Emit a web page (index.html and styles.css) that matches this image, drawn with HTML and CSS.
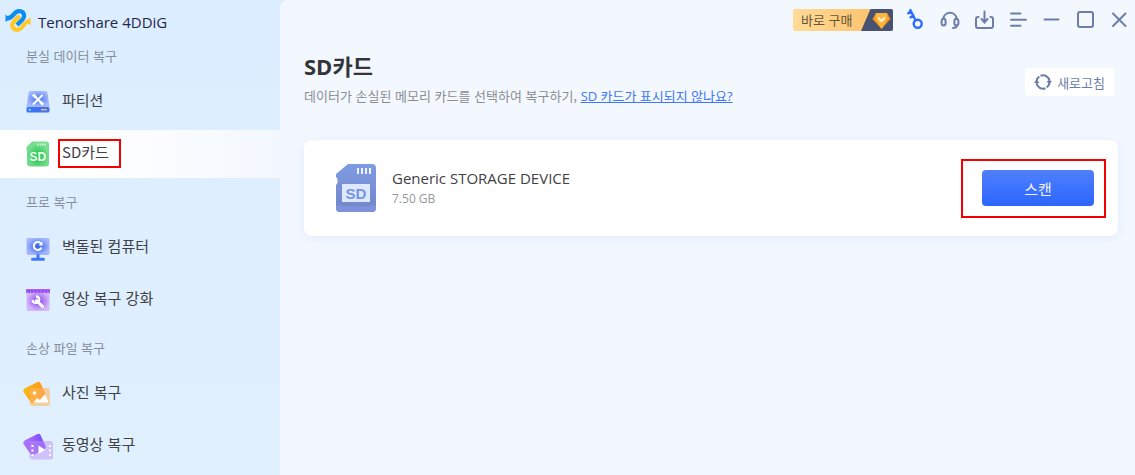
FILE: index.html
```html
<!DOCTYPE html>
<html lang="ko">
<head>
<meta charset="utf-8">
<title>Tenorshare 4DDiG</title>
<link rel="stylesheet" href="styles.css">
</head>
<body>
<div class="app">
  <aside class="sidebar">
    <div class="brand">
      <svg class="brand-logo" width="28" height="24" viewBox="0 0 28 24" aria-hidden="true">
        <path d="M25.600 9.300v8l-5-3.500Z" fill="#ffc928"/>
        <path d="M.5 6.500v7.500l5-3.500Z" fill="#0b8df0"/>
        <path d="M14.500 8L9 13.500c-4 4.500-.5 8.300 3.500 8.300 5.500 0 5.500-7.500 11.500-8.500" fill="none" stroke="#ffc928" stroke-width="4.200"/>
        <path d="M2.500 10.300C8.500 10 8.500 3.200 14 3.200c5 0 6.500 4.800 3.500 8.300l-5.500 5.500" fill="none" stroke="#0b8df0" stroke-width="4.200"/>
        <path d="M14.500 8L9 13.500" stroke="#ffc928" stroke-width="4.200"/>
      </svg>
      <span class="brand-name">Tenorshare 4DDiG</span>
    </div>
    <nav class="menu">
      <h2 class="menu-heading">분실 데이터 복구</h2>
      <ul class="menu-list">
        <li><a class="menu-item" href="#">
          <svg class="menu-icon" width="32" height="28" viewBox="0 0 32 28" aria-hidden="true">
            <defs><radialGradient id="g-disk"><stop offset="0" stop-color="#4673f5"/><stop offset="1" stop-color="#a5b9fb"/></radialGradient></defs>
            <path d="M8.500 3h15q1.800 0 2 2l2 14h-23l2-14q.2-2 2-2Z" fill="url(#g-disk)"/>
            <rect x="4.500" y="19" width="23" height="5.500" rx="1.500" fill="#3f72f2"/>
            <circle cx="7.800" cy="21.700" r="1.200" fill="#5fe6ff"/><path d="M19 21.700h6" stroke="#e0b676" stroke-width="1.600"/>
            <path d="M12.500 8l8 8M20 7.500l-8.500 8.500" stroke="#fff" stroke-width="2" stroke-linecap="round"/>
            <path d="M11 6.500l3 3M18.500 14l2.500 2.500" stroke="#fff" stroke-width="3"/>
          </svg>
          <span class="menu-text">파티션</span></a></li>
        <li><a class="menu-item menu-item-active" href="#" aria-current="page">
          <svg class="menu-icon" width="32" height="28" viewBox="0 0 32 28" aria-hidden="true">
            <defs><radialGradient id="g-sd" cy=".6"><stop offset="0" stop-color="#10c43c"/><stop offset="1" stop-color="#78dd91"/></radialGradient></defs>
            <path d="M10 1.500h14q3 0 3 3v19q0 3-3 3H8q-3 0-3-3v-12l-.5-1V7Z" fill="url(#g-sd)"/>
            <path d="M15.500 4.500h9" stroke="#d9ffe2" stroke-width="2" stroke-dasharray="1.300 1"/>
            <text class="sd-small" x="15.800" y="20.500" text-anchor="middle">SD</text>
          </svg>
          <span class="menu-text marked-text">SD카드</span></a></li>
      </ul>
      <h2 class="menu-heading">프로 복구</h2>
      <ul class="menu-list">
        <li><a class="menu-item" href="#">
          <svg class="menu-icon" width="32" height="28" viewBox="0 0 32 28" aria-hidden="true">
            <defs><radialGradient id="g-pc"><stop offset="0" stop-color="#3261f3"/><stop offset="1" stop-color="#a3b6fa"/></radialGradient></defs>
            <rect x="4.500" y="4" width="23" height="17" rx="2" fill="url(#g-pc)"/>
            <path d="M16 21v4M10.500 25.300h11" stroke="#3f79fb" stroke-width="3" stroke-linecap="round"/>
            <path d="M19 9.500a4 4 0 1 0 .5 4" fill="none" stroke="#fff" stroke-width="2"/><path d="M20.500 7.500v4h-4Z" fill="#fff"/>
          </svg>
          <span class="menu-text">벽돌된 컴퓨터</span></a></li>
        <li><a class="menu-item" href="#">
          <svg class="menu-icon" width="32" height="28" viewBox="0 0 32 28" aria-hidden="true">
            <defs><radialGradient id="g-vid"><stop offset="0" stop-color="#8742ee"/><stop offset="1" stop-color="#d3b6f8"/></radialGradient></defs>
            <path d="M4.500 5h23v18q0 2-2 2h-19q-2 0-2-2Z" fill="url(#g-vid)"/>
            <path d="M4 5h24" stroke="#9a45f5" stroke-width="3.600"/><path d="M4.500 5.500h23" stroke="#c996fb" stroke-width="1.500" stroke-dasharray="1 2.500"/>
            <path d="M14.500 14.500l6 6" stroke="#fff" stroke-width="3" stroke-linecap="round"/>
            <path d="M14 10.500a3.200 3.200 0 1 1-3.300 3.400" fill="none" stroke="#fff" stroke-width="2.400"/>
          </svg>
          <span class="menu-text">영상 복구 강화</span></a></li>
      </ul>
      <h2 class="menu-heading">손상 파일 복구</h2>
      <ul class="menu-list">
        <li><a class="menu-item" href="#">
          <svg class="menu-icon" width="32" height="28" viewBox="0 0 32 28" aria-hidden="true">
            <defs><linearGradient id="g-photo" x2="1" y2=".4"><stop offset="0" stop-color="#fac313"/><stop offset="1" stop-color="#ff8d20"/></linearGradient></defs>
            <path d="M2.500 8.500L15.500 2q2-1 3 1l5 11q1 2-1 3l-11 6q-2 1-3-1L1.500 12q-1-2 1-3.500Z" fill="url(#g-photo)"/>
            <path d="M8 8h18q2 0 2 2v14q0 2-2 2H10q-2 0-2-2Z" fill="#ffb75e" fill-opacity=".6"/>
            <circle cx="12.500" cy="13" r="1.800" fill="#fff"/><path d="M11.500 22.500l3.500-4.500 3 2 5-6 3.500 8.500Z" fill="#fff"/>
          </svg>
          <span class="menu-text">사진 복구</span></a></li>
        <li><a class="menu-item" href="#">
          <svg class="menu-icon" width="32" height="28" viewBox="0 0 32 28" aria-hidden="true">
            <defs><linearGradient id="g-clip" x2="1" y2="0"><stop offset="0" stop-color="#b477fb"/><stop offset="1" stop-color="#7446fb"/></linearGradient></defs>
            <path d="M2.500 8.500L15.500 2q2-1 3 1l5 11q1 2-1 3l-11 6q-2 1-3-1L1.500 12q-1-2 1-3.500Z" fill="url(#g-clip)"/>
            <path d="M7.500 9h21q2.500 0 2.500 2v14q0 2.500-2.500 2.500h-18q-2 0-3-2Z" fill="#bd91f6" fill-opacity=".5"/>
            <path d="M10.500 13v11M28 13v11" stroke="#fff" stroke-width="2" stroke-dasharray="2 2.500"/>
            <path d="M16.500 13.500l6.500 4.200-6.500 4.300Z" fill="#fff"/>
          </svg>
          <span class="menu-text">동영상 복구</span></a></li>
      </ul>
    </nav>
  </aside>

  <main class="main">
    <header class="toolbar">
      <button class="buy" type="button">
        <span class="buy-text">바로 구매</span>
        <svg class="buy-badge" width="34" height="22" viewBox="0 0 34 22" aria-hidden="true">
          <path d="M11.500 0H34v22H2Z" fill="#475371"/>
          <path d="M17 4h11l3.500 6-9 10-9-10Z" fill="#f9931b"/>
          <path d="M17 4h11l.5 6-6 10L16.500 10Z" fill="#ffb63c"/>
          <path d="M19 8.500l3.500 3.500L26 8.500" fill="none" stroke="#fff4d5" stroke-width="2"/>
        </svg>
      </button>
      <div class="tools">
        <button class="tool tool-key" type="button" aria-label="라이선스">
          <svg width="20" height="20" viewBox="0 0 20 20"><circle cx="12.700" cy="13.800" r="4"/><path d="M10.500 10.300L5.300 0M5.800 1.200L3.300 3.200M8.300 5.200L5.600 7.200"/></svg></button>
        <button class="tool" type="button" aria-label="고객 지원">
          <svg width="20" height="20" viewBox="0 0 20 20"><path d="M4.300 8.500a6.800 6.800 0 0 1 13.400 0"/><ellipse cx="4.600" cy="12.200" rx="2.100" ry="3.400"/><ellipse cx="17.400" cy="12.200" rx="2.100" ry="3.400"/><path d="M18 15.500q-.5 2.500-4 2.500"/></svg></button>
        <button class="tool" type="button" aria-label="다운로드">
          <svg width="20" height="20" viewBox="0 0 20 20"><path d="M5.500 7H5q-2 0-2 2v7q0 2 2 2h13q2 0 2-2V9q0-2-2-2h-.5M11.500 1.500v10.500M8.500 9l3 3.500L14.500 9"/></svg></button>
        <button class="tool" type="button" aria-label="메뉴">
          <svg width="20" height="20" viewBox="0 0 20 20"><path d="M4 3.500h9.500M4 9.700h15M4 15.700h9.500"/></svg></button>
        <button class="tool" type="button" aria-label="최소화">
          <svg width="20" height="20" viewBox="0 0 20 20"><path d="M3.500 9.500h14"/></svg></button>
        <button class="tool" type="button" aria-label="최대화">
          <svg width="20" height="20" viewBox="0 0 20 20"><rect x="3" y="2" width="15" height="15" rx="2"/></svg></button>
        <button class="tool" type="button" aria-label="닫기">
          <svg width="20" height="20" viewBox="0 0 20 20"><path d="M4 3.500l12.500 12.500M16.500 3.500L4 16"/></svg></button>
      </div>
    </header>

    <section class="intro">
      <div class="intro-copy">
        <h1 class="title">SD카드</h1>
        <p class="subtitle">데이터가 손실된 메모리 카드를 선택하여 복구하기, <a class="help-link" href="#">SD 카드가 표시되지 않나요?</a></p>
      </div>
      <button class="refresh" type="button">
        <svg width="18" height="18" viewBox="0 0 18 18" aria-hidden="true">
          <path d="M2.500 8A6.600 6.600 0 0 1 5.300 3.600M6.500 2.800A6.600 6.600 0 0 1 15.500 8M15.500 10A6.600 6.600 0 0 1 12.700 14.400M11.500 15.200A6.600 6.600 0 0 1 2.500 10" fill="none" stroke="#6d7da9" stroke-width="2"/>
          <path d="M0 10l2.700-3.600L5.500 10ZM18 8l-2.700 3.600L12.500 8Z" fill="#6d7da9"/>
        </svg>
        <span>새로고침</span>
      </button>
    </section>

    <article class="device">
      <svg class="device-icon" width="42" height="50" viewBox="0 0 42 50" aria-hidden="true">
        <defs><linearGradient id="g-card" x2="0" y2="1"><stop offset="0" stop-color="#7e9be2"/><stop offset="1" stop-color="#7385c9"/></linearGradient></defs>
        <path d="M13 1h24q4 0 4 4v40q0 4-4 4H5q-4 0-4-4V22l1.500-2v-4L1 14v-3Z" fill="url(#g-card)"/>
        <path d="M1 42q20 3 40 0v3q0 4-4 4H5q-4 0-4-4Z" fill="#7e92dc"/>
        <path d="M23 5v6M27 5v6M31 5v6M35 5v6" stroke="#edf3ff" stroke-width="2"/>
        <rect x="7" y="21" width="28" height="18" fill="#dee8ff"/>
        <text class="sd-large" x="21" y="35.500" text-anchor="middle">SD</text>
      </svg>
      <div class="device-copy">
        <h2 class="device-name">Generic STORAGE DEVICE</h2>
        <p class="device-size">7.50 GB</p>
      </div>
      <div class="marked-action"><button class="scan" type="button">스캔</button></div>
    </article>
  </main>
</div>
</body>
</html>
```
FILE: styles.css
```css
* { box-sizing: border-box; }

body {
  margin: 0;
  background: #dfefff;
  color: #3f4144;
  font-family: "Open Sans", "Noto Sans CJK KR", sans-serif;
  font-size: 15px;
}

h1, h2, p, ul { margin: 0; padding: 0; }
ul { list-style: none; }
a { color: inherit; text-decoration: none; }

button {
  margin: 0;
  padding: 0;
  border: 0;
  background: none;
  font-family: inherit;
  cursor: pointer;
}

svg { display: block; flex: none; }

.app {
  display: grid;
  grid-template-columns: 280px 1fr;
  min-height: 100vh;
  background: linear-gradient(#dcedff, #e0f0ff);
}

.brand {
  display: flex;
  align-items: flex-end;
  gap: 5px;
  height: 32px;
  padding-left: 5px;
}

.brand-name {
  color: #25264d;
  font-size: 15px;
  line-height: 20px;
}

.menu-heading {
  padding: 14px 26px 12px;
  color: #858e9a;
  font-family: "Noto Sans CJK KR", sans-serif;
  font-size: 13px;
  font-weight: 400;
  line-height: 20px;
}

.menu-list {
  display: grid;
  gap: 4px;
}

.menu-item {
  display: flex;
  align-items: center;
  gap: 8px;
  height: 48px;
  padding-left: 22px;
}

.menu-item-active { background: linear-gradient(90deg, #ffffff 30%, #f3f8ff); }

.menu-text {
  padding-bottom: 4px;
  font-family: "Noto Sans CJK KR", sans-serif;
  font-size: 15px;
  line-height: 24px;
}

.marked-text, .marked-action { position: relative; }

.marked-text::after, .marked-action::after {
  content: "";
  position: absolute;
  border: 2px solid #f40000;
  pointer-events: none;
}

.marked-text::after { inset: -1px -12px 0 -4px; }
.marked-action::after { inset: -11px -12px -12px -21px; }

.sd-small, .sd-large {
  font-family: "Liberation Sans", sans-serif;
  font-weight: 700;
}

.sd-small { fill: #f4fff6; font-size: 12px; }
.sd-large { fill: #7593e8; font-size: 15px; }

.main {
  padding: 0 17px 24px 24px;
  border-top-left-radius: 8px;
  background: #f3f8ff;
}

.toolbar {
  display: flex;
  align-items: center;
  justify-content: flex-end;
  gap: 12px;
  height: 40px;
  margin-right: -11px;
}

.buy {
  display: flex;
  align-items: center;
  border-radius: 2px;
  overflow: hidden;
  background: linear-gradient(90deg, #ffdb98, #fdbd63);
}

.buy-text {
  padding: 0 0 1px 8px;
  width: 66px;
  color: #65543c;
  font-family: "Noto Sans CJK KR", sans-serif;
  font-size: 13px;
  line-height: 21px;
  text-align: left;
}

.tools { display: flex; gap: 14px; }

.tool svg {
  fill: none;
  stroke: #6d7da9;
  stroke-width: 2;
  stroke-linecap: round;
  overflow: visible;
}

.tool-key svg {
  stroke: #2f6bff;
  stroke-width: 2.4;
}

.intro {
  display: flex;
  align-items: center;
  justify-content: space-between;
  gap: 24px;
  padding: 10px 4px 34px 0;
}

.title {
  color: #333537;
  font-size: 22px;
  font-weight: 700;
  line-height: 32px;
}

.subtitle {
  padding-top: 4px;
  color: #8b8d91;
  font-family: "Noto Sans CJK KR", sans-serif;
  font-size: 13px;
  line-height: 20px;
}

.help-link {
  color: #3f76fa;
  font-family: "Open Sans", "Noto Sans CJK KR", sans-serif;
  text-decoration: underline;
}

.refresh {
  display: flex;
  align-items: center;
  gap: 5px;
  height: 28px;
  margin-top: 8px;
  padding: 0 9px;
  border-radius: 4px;
  background: #ffffff;
  color: #6d7da9;
  font-family: "Noto Sans CJK KR", sans-serif;
  font-size: 13px;
}

.device {
  display: flex;
  align-items: center;
  gap: 15px;
  padding: 23px 24px 23px 31px;
  border-radius: 8px;
  background: #ffffff;
  box-shadow: 0 2px 12px #e2eaff;
}

.device-copy { flex: 1; }

.device-name {
  font-size: 15px;
  font-weight: 400;
  line-height: 22px;
}

.device-size {
  color: #96989c;
  font-size: 12px;
  line-height: 20px;
}

.scan {
  display: block;
  width: 112px;
  height: 36px;
  border-radius: 4px;
  background: linear-gradient(#4f80ff, #2c66ff);
  color: #f0f4ff;
  font-family: "Noto Sans CJK KR", sans-serif;
  font-size: 15px;
}
```
